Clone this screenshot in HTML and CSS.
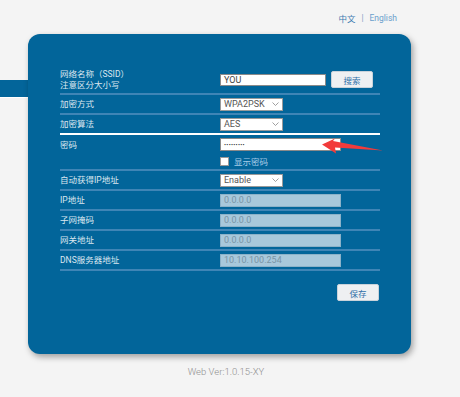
FILE: index.html
```html
<!DOCTYPE html>
<html lang="zh">
<head>
    <meta charset="UTF-8">
    <meta name="viewport" content="width=device-width, initial-scale=1.0">
    <title>WiFi 设置</title>
    <link rel="stylesheet" href="styles.css">
</head>
<body>
    <!-- Idioma -->
    <div class="lang">
        <span class="zh">中文</span><span class="sep">|</span><span class="en">English</span>
    </div>

    <div class="franja"></div>

    <!-- Panel principal -->
    <div class="panel">
        <div class="fila alta">
            <div class="etiqueta">网络名称（SSID）<br>注意区分大小写</div>
            <div class="control">
                <span class="campo ssid">YOU</span>
                <span class="boton">搜索</span>
            </div>
        </div>
        <div class="fila">
            <div class="etiqueta">加密方式</div>
            <div class="control"><span class="sel">WPA2PSK<svg width="7" height="4" viewBox="0 0 7 4"><path d="M0.5 0.5 L3.5 3.5 L6.5 0.5" fill="none" stroke="#888" stroke-width="0.8"/></svg></span></div>
        </div>
        <div class="fila blanca">
            <div class="etiqueta">加密算法</div>
            <div class="control"><span class="sel">AES<svg width="7" height="4" viewBox="0 0 7 4"><path d="M0.5 0.5 L3.5 3.5 L6.5 0.5" fill="none" stroke="#888" stroke-width="0.8"/></svg></span></div>
        </div>
        <div class="fila clave">
            <div class="etiqueta">密码</div>
            <div class="control columna">
                <span class="campo largo puntos">•••••••••</span>
                <label class="mostrar"><span class="caja"></span>显示密码</label>
                <svg class="flecha" width="64" height="18" viewBox="0 0 64 18">
                    <path d="M0 6.5 L13 0.5 L11 3 L61 12.5 L13 9.5 L14 15.5 Z" fill="#f23b3b"/>
                </svg>
            </div>
        </div>
        <div class="fila">
            <div class="etiqueta">自动获得IP地址</div>
            <div class="control"><span class="sel">Enable<svg width="7" height="4" viewBox="0 0 7 4"><path d="M0.5 0.5 L3.5 3.5 L6.5 0.5" fill="none" stroke="#888" stroke-width="0.8"/></svg></span></div>
        </div>
        <div class="fila">
            <div class="etiqueta">IP地址</div>
            <div class="control"><span class="campo largo apagado">0.0.0.0</span></div>
        </div>
        <div class="fila">
            <div class="etiqueta">子网掩码</div>
            <div class="control"><span class="campo largo apagado">0.0.0.0</span></div>
        </div>
        <div class="fila">
            <div class="etiqueta">网关地址</div>
            <div class="control"><span class="campo largo apagado">0.0.0.0</span></div>
        </div>
        <div class="fila">
            <div class="etiqueta">DNS服务器地址</div>
            <div class="control"><span class="campo largo apagado">10.10.100.254</span></div>
        </div>

        <div class="acciones">
            <span class="boton">保存</span>
        </div>
    </div>

    <div class="version">Web Ver:1.0.15-XY</div>
</body>
</html>
```

FILE: styles.css
```css
/* Cuerpo */
body {
    margin: 0;
    background-color: #f4f4f4;
    font-family: Roboto, "Noto Sans CJK SC", sans-serif;
    position: relative;
}

/* Selector de idioma */
.lang {
    display: flex;
    justify-content: flex-end;
    align-items: center;
    gap: 6px;
    padding: 12px 63px 0 0;
    height: 12px;
    font-size: 8.5px;
}

.lang .zh { color: #3b79b0; }
.lang .sep { color: #7f9fbf; }
.lang .en { color: #6a9fcc; }

/* Franja detrás del panel */
.franja {
    position: absolute;
    top: 80px;
    left: 0;
    width: 60px;
    height: 17px;
    background-color: #03659a;
    border-bottom: 1px solid #ffffff;
    z-index: 0;
}

/* Panel azul */
.panel {
    position: relative;
    z-index: 1;
    margin: 10px 0 0 28px;
    width: 383px;
    height: 320px;
    box-sizing: border-box;
    padding: 32px 31px 0 32px;
    background-color: #02659a;
    border-radius: 12px;
    box-shadow: 2px 3px 6px rgba(0, 0, 0, 0.35);
}

.fila {
    display: flex;
    align-items: center;
    height: 18px;
    border-bottom: 2px solid #3f85b6;
}

.fila.alta { height: 27px; }
.fila.blanca { border-bottom-color: #ffffff; }
.fila.clave {
    height: 34px;
    align-items: flex-start;
}

.etiqueta {
    width: 160px;
    color: #dce7f0;
    font-size: 8.5px;
    line-height: 11px;
}

.fila.clave .etiqueta { padding-top: 5px; }

.control {
    display: flex;
    align-items: center;
    gap: 5px;
}

.control.columna {
    position: relative;
    flex-direction: column;
    align-items: flex-start;
    gap: 4px;
    padding-top: 3px;
}

/* Campos */
.campo {
    display: block;
    box-sizing: border-box;
    height: 12px;
    padding: 0 3px;
    background: #ffffff;
    border: 1px solid #8a8a8a;
    font-family: Roboto, "Liberation Sans", sans-serif;
    font-size: 9px;
    line-height: 10px;
    color: #444;
}

.campo.ssid { width: 106px; }
.campo.largo { width: 121px; height: 13px; }

.campo.puntos {
    font-size: 6px;
    letter-spacing: 0.3px;
    line-height: 11px;
    color: #222;
}

.campo.apagado {
    background: #a8c8db;
    border-color: #8cb2c9;
    color: #7894a6;
    line-height: 11px;
}

.sel {
    display: flex;
    justify-content: space-between;
    align-items: center;
    box-sizing: border-box;
    width: 63px;
    height: 13px;
    padding: 0 3px 0 3px;
    background: #ffffff;
    border: 1px solid #9a9a9a;
    font-family: Roboto, "Liberation Sans", sans-serif;
    font-size: 9px;
    color: #555;
}

.boton {
    display: flex;
    align-items: center;
    justify-content: center;
    box-sizing: border-box;
    width: 42px;
    height: 17px;
    background: #eef0f2;
    border: 1px solid #c9d2da;
    border-radius: 2px;
    color: #2f6fa8;
    font-size: 8.5px;
}

/* Mostrar contraseña */
.mostrar {
    display: flex;
    align-items: center;
    gap: 5px;
    color: #a6cbe8;
    font-size: 8.5px;
}

.caja {
    width: 9px;
    height: 9px;
    background: #ffffff;
    border: 1px solid #9a9a9a;
    box-sizing: border-box;
}

/* Flecha roja */
.flecha {
    position: absolute;
    top: 3px;
    left: 102px;
}

.acciones {
    display: flex;
    justify-content: flex-end;
    padding: 13px 1px 0 0;
}

/* Versión */
.version {
    padding: 12px 8px 0 0;
    text-align: center;
    color: #8f8f8f;
    font-size: 9.5px;
    font-weight: 300;
}
```
